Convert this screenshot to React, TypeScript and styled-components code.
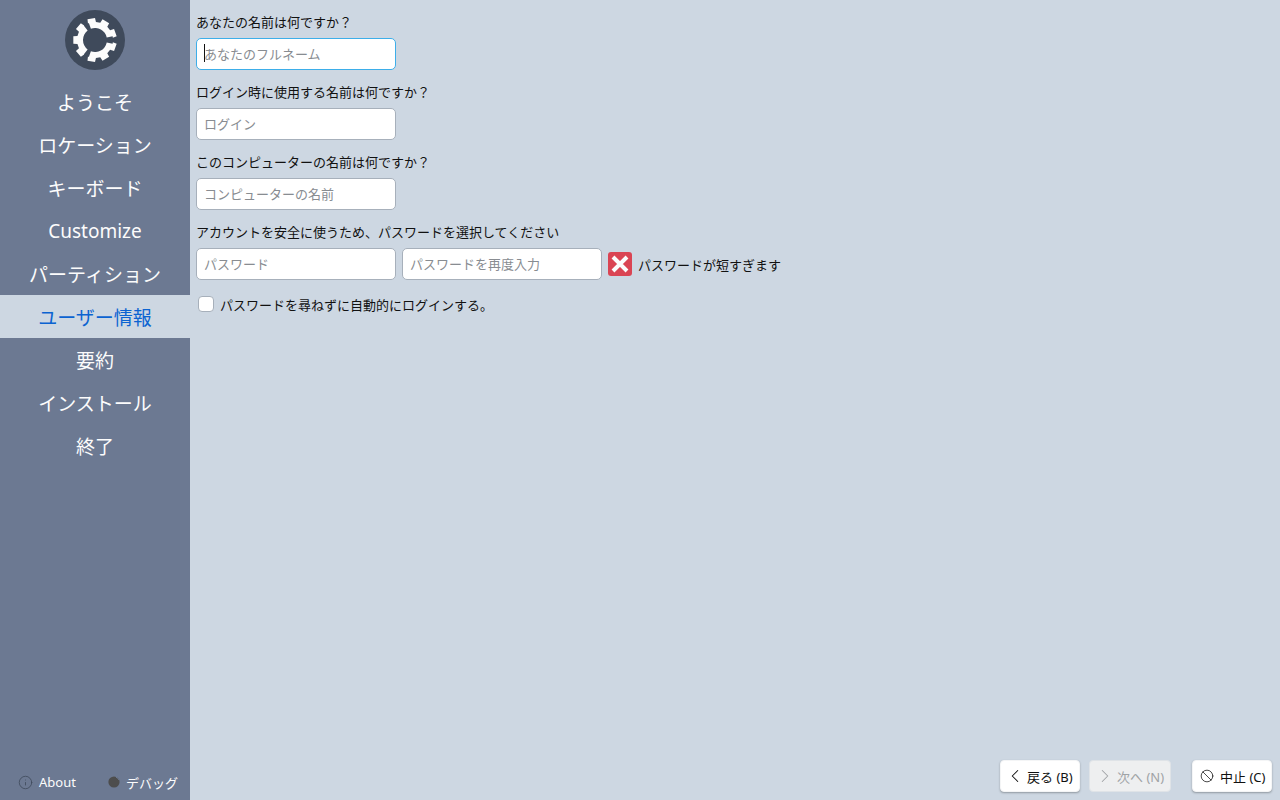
import React from 'react';
import styled, { createGlobalStyle } from 'styled-components';
import { Ban, ChevronLeft, ChevronRight, Info } from 'lucide-react';

const STEPS = [
  'ようこそ',
  'ロケーション',
  'キーボード',
  'Customize',
  'パーティション',
  'ユーザー情報',
  '要約',
  'インストール',
  '終了',
];

const polar = (r: number, deg: number) => {
  const a = (deg * Math.PI) / 180;
  return `${(30 + r * Math.cos(a)).toFixed(2)} ${(30 + r * Math.sin(a)).toFixed(2)}`;
};

// one arc of the cog: outer edge with teeth, then back along the hole
const cogSegment = (from: number, to: number, teeth: number[]) => {
  const hole = 12;
  const valley = 18;
  const tip = 22;
  let d = `M${polar(hole, from)} L${polar(valley, from)}`;
  teeth.forEach((t) => {
    d += ` L${polar(valley, t - 13)} L${polar(tip, t - 10)} L${polar(tip, t + 10)} L${polar(valley, t + 13)}`;
  });
  d += ` L${polar(valley, to)} L${polar(hole, to)} A${hole} ${hole} 0 0 0 ${polar(hole, from)} Z`;
  return d;
};

const COG = [
  cogSegment(-110, -12, [-100, -60, -20]),
  cogSegment(12, 110, [20, 60, 100]),
  cogSegment(128, 232, [140, 180, 220]),
];

export default function App() {
  return (
    <Page>
      <GlobalStyle />
      <Sidebar>
        <LogoWrap>
          <svg width="60" height="60" viewBox="0 0 60 60">
            <circle cx="30" cy="30" r="30" fill="#3f4a5b" />
            {COG.map((d) => (
              <path key={d} d={d} fill="#fcfcfc" />
            ))}
          </svg>
        </LogoWrap>
        <StepList>
          {STEPS.map((step) => (
            <Step key={step} $active={step === 'ユーザー情報'}>
              {step}
            </Step>
          ))}
        </StepList>
        <SideFooter>
          <FooterItem>
            <Info size={15} color="#3f4a5b" strokeWidth={1.3} />
            About
          </FooterItem>
          <FooterItem>
            <svg width="12" height="12" viewBox="0 0 12 12">
              <circle cx="6" cy="6" r="5.6" fill="#4d4d4d" />
              <path d="M8 1.2A5 5 0 0 1 11 4" stroke="#6c7992" strokeWidth="1" fill="none" />
            </svg>
            デバッグ
          </FooterItem>
        </SideFooter>
      </Sidebar>
      <Main>
        <Form>
          <Field>
            <Label>あなたの名前は何ですか？</Label>
            <InputWrap>
              <TextInput $focused placeholder="あなたのフルネーム" />
              <Caret />
            </InputWrap>
          </Field>
          <Field>
            <Label>ログイン時に使用する名前は何ですか？</Label>
            <TextInput placeholder="ログイン" />
          </Field>
          <Field>
            <Label>このコンピューターの名前は何ですか？</Label>
            <TextInput placeholder="コンピューターの名前" />
          </Field>
          <Field>
            <Label>アカウントを安全に使うため、パスワードを選択してください</Label>
            <PasswordRow>
              <TextInput placeholder="パスワード" />
              <TextInput placeholder="パスワードを再度入力" />
              <ErrorIcon>
                <svg width="24" height="24" viewBox="0 0 24 24">
                  <rect width="24" height="24" rx="3" fill="#da4453" />
                  <path d="M5 5 19 19M19 5 5 19" stroke="#fcfcfc" strokeWidth="4" />
                </svg>
              </ErrorIcon>
              <span>パスワードが短すぎます</span>
            </PasswordRow>
          </Field>
          <CheckRow>
            <CheckBox />
            パスワードを尋ねずに自動的にログインする。
          </CheckRow>
        </Form>
        <ButtonBar>
          <NavButton>
            <ChevronLeft size={22} strokeWidth={1.1} />
            戻る (B)
          </NavButton>
          <NextButton $disabled>
            <ChevronRight size={22} strokeWidth={1.1} />
            次へ (N)
          </NextButton>
          <CancelButton>
            <Ban size={14} strokeWidth={1.3} />
            中止 (C)
          </CancelButton>
        </ButtonBar>
      </Main>
    </Page>
  );
}

const GlobalStyle = createGlobalStyle`
  html, body {
    margin: 0;
    height: 100%;
    overflow: hidden;
  }

  body, input, button {
    font-family: "Noto Sans", "Noto Sans CJK JP", sans-serif;
  }
`;

const Page = styled.div`
  display: flex;
  height: 800px;
  background: #cdd7e2;
  color: #111;
  font-size: 13px;
`;

const Sidebar = styled.aside`
  display: flex;
  flex-direction: column;
  width: 190px;
  background: #6c7992;
`;

const LogoWrap = styled.div`
  display: flex;
  justify-content: center;
  padding: 10px 0;
  height: 60px;
`;

const StepList = styled.nav`
  display: flex;
  flex-direction: column;
`;

const Step = styled.div<{ $active?: boolean }>`
  height: 43px;
  display: flex;
  align-items: center;
  justify-content: center;
  font-size: 19px;
  color: ${(p) => (p.$active ? '#0b63d1' : '#fcfcfc')};
  background: ${(p) => (p.$active ? '#cdd7e2' : 'transparent')};
`;

const SideFooter = styled.div`
  display: flex;
  justify-content: space-between;
  margin-top: auto;
  padding: 0 12px 8px 18px;
`;

const FooterItem = styled.div`
  display: flex;
  align-items: center;
  gap: 6px;
  height: 20px;
  color: #fcfcfc;
  font-size: 13px;
`;

const Main = styled.main`
  flex: 1;
  display: flex;
  flex-direction: column;
  justify-content: space-between;
  padding: 12px 8px 8px 6px;
`;

const Form = styled.div`
  display: flex;
  flex-direction: column;
  gap: 12px;
`;

const Field = styled.div`
  display: flex;
  flex-direction: column;
  gap: 6px;
`;

const Label = styled.div`
  height: 20px;
  line-height: 20px;
`;

const InputWrap = styled.div`
  position: relative;
  width: 200px;
`;

const TextInput = styled.input<{ $focused?: boolean }>`
  box-sizing: border-box;
  width: 200px;
  height: 32px;
  padding: 0 7px;
  border: 1px solid ${(p) => (p.$focused ? '#3daee9' : '#a7b0bb')};
  border-radius: 5px;
  background: #fff;
  font-size: 13px;
  outline: none;

  &::placeholder {
    color: #888c91;
    opacity: 1;
  }
`;

const Caret = styled.span`
  position: absolute;
  left: 8px;
  top: 6px;
  width: 1px;
  height: 18px;
  background: #111;
`;

const PasswordRow = styled.div`
  display: flex;
  align-items: center;
  gap: 6px;
`;

const ErrorIcon = styled.span`
  display: flex;
`;

const CheckRow = styled.label`
  display: flex;
  align-items: center;
  gap: 6px;
  height: 20px;
  margin-top: 2px;
  padding-left: 2px;
`;

const CheckBox = styled.span`
  box-sizing: border-box;
  width: 16px;
  height: 16px;
  border: 1px solid #a7b0bb;
  border-radius: 4px;
  background: #fff;
`;

const ButtonBar = styled.div`
  display: flex;
  justify-content: flex-end;
  gap: 9px;
`;

const NavButton = styled.button<{ $disabled?: boolean }>`
  box-sizing: border-box;
  display: flex;
  align-items: center;
  gap: 1px;
  width: 80px;
  height: 32px;
  padding: 0 0 0 3px;
  border: 1px solid ${(p) => (p.$disabled ? '#dfe3e7' : '#f4f5f6')};
  border-radius: 4px;
  background: ${(p) => (p.$disabled ? '#eeeff0' : '#fff')};
  box-shadow: ${(p) => (p.$disabled ? 'none' : '0 1px 2px rgba(35, 38, 41, 0.35)')};
  color: ${(p) => (p.$disabled ? '#a0a3a6' : '#111')};
  font-size: 13px;
  white-space: nowrap;
`;

const NextButton = styled(NavButton)`
  width: 82px;
  padding-left: 4px;
`;

const CancelButton = styled(NavButton)`
  margin-left: 12px;
  gap: 6px;
  padding-left: 7px;
`;
